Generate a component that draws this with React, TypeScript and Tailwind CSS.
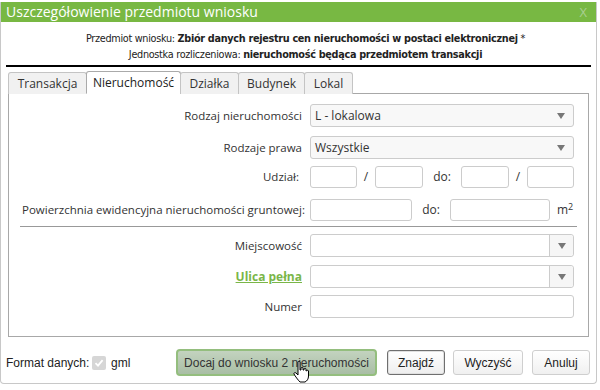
import React from 'react';

const tabs = [
  { name: 'Transakcja', w: 'w-[79px]' },
  { name: 'Nieruchomość', w: 'w-[95px]' },
  { name: 'Działka', w: 'w-[59px]' },
  { name: 'Budynek', w: 'w-[67px]' },
  { name: 'Lokal', w: 'w-[49px]' },
];

const Arrow = () => (
  <svg width="8" height="6" viewBox="0 0 8 6">
    <path d="M0 0 L8 0 L4 6 Z" fill="#777" />
  </svg>
);

const Select = ({ value }: { value: string }) => (
  <div className="w-[264px] h-[23px] shrink-0 border border-[#ccc] rounded-[3px] bg-[#f8f8f8] flex items-center justify-between pl-[4px] pr-[8px] text-[12px] text-[#333]">
    <span>{value}</span>
    <Arrow />
  </div>
);

const Combo = () => (
  <div className="w-[264px] h-[23px] shrink-0 border border-[#ccc] rounded-[3px] bg-white flex">
    <div className="flex-1" />
    <div className="w-[24px] border-l border-[#ccc] bg-[#f6f6f6] rounded-r-[3px] flex items-center justify-center">
      <Arrow />
    </div>
  </div>
);

const Input = ({ w }: { w: string }) => (
  <div className={`${w} h-[22px] shrink-0 border border-[#ccc] rounded-[3px] bg-white`} />
);

const Label = ({ children, green }: { children: React.ReactNode; green?: boolean }) => (
  <div
    className={
      green
        ? 'w-[293px] shrink-0 text-right text-[12px] font-bold text-[#7ab648] underline'
        : 'w-[293px] shrink-0 text-right text-[11.5px] text-[#333]'
    }
  >
    {children}
  </div>
);

export default function App() {
  return (
    <div className="w-[600px] h-[390px] bg-white relative overflow-hidden" style={{ fontFamily: '"Open Sans", sans-serif' }}>
      <div className="mt-[2px] w-[597px] h-[382px] border border-t-0 border-[#c8c8c8] rounded-b-[4px] flex flex-col bg-white">
        {/* Title */}
        <div className="h-[20px] bg-[#78b843] flex items-center justify-between pl-[5px] pr-[9px]">
          <span className="text-white text-[14px] leading-none">Uszczegółowienie przedmiotu wniosku</span>
          <span className="text-[#a9cf92] text-[13px] leading-none">X</span>
        </div>

        {/* Header */}
        <div
          className="pt-[9px] pb-[2px] mx-[5px] border-b-2 border-black text-center text-[9.7px] text-[#222] leading-[16px] whitespace-nowrap"
          style={{ fontFamily: '"DejaVu Sans", sans-serif', letterSpacing: '-0.3px' }}
        >
          <div className="pl-[14px]">
            Przedmiot wniosku: <b>Zbiór danych rejestru cen nieruchomości w postaci elektronicznej</b> *
          </div>
          <div className="pl-[14px]">
            Jednostka rozliczeniowa: <b>nieruchomość będąca przedmiotem transakcji</b>
          </div>
        </div>

        {/* Tabs */}
        <div className="mt-[4px] ml-[7px] flex items-end h-[23px] relative z-10">
          {tabs.map((t) => (
            <div
              key={t.name}
              className={
                t.name === 'Nieruchomość'
                  ? `${t.w} h-[23px] flex items-center justify-center bg-white border border-[#aaa] border-b-white rounded-t-[3px] text-[12px] text-[#222] -mr-px`
                  : `${t.w} h-[22px] flex items-center justify-center bg-[#f1f1f1] border border-[#c4c4c4] border-b-0 rounded-t-[3px] text-[12px] text-[#333] -mr-px`
              }
            >
              {t.name}
            </div>
          ))}
        </div>

        {/* Panel */}
        <div className="ml-[7px] w-[581px] h-[244px] -mt-px border border-[#a8a8a8] pt-[10px] flex flex-col">
          <div className="flex items-center gap-[8px]">
            <Label>Rodzaj nieruchomości</Label>
            <Select value="L - lokalowa" />
          </div>
          <div className="flex items-center gap-[8px] mt-[9px]">
            <Label>Rodzaje prawa</Label>
            <Select value="Wszystkie" />
          </div>
          <div className="flex items-center mt-[7px] text-[12px] text-[#333]">
            <div className="w-[290px] shrink-0 text-right text-[11.5px]">Udział:</div>
            <div className="w-[11px] shrink-0" />
            <Input w="w-[47px]" />
            <span className="w-[18px] shrink-0 text-center">/</span>
            <Input w="w-[48px]" />
            <span className="w-[38px] shrink-0 text-center">do:</span>
            <Input w="w-[48px]" />
            <span className="w-[18px] shrink-0 text-center">/</span>
            <Input w="w-[47px]" />
          </div>
          <div className="flex items-center mt-[11px] text-[12px] text-[#333] whitespace-nowrap">
            <div className="pl-[13px] w-[301px] shrink-0 text-[11.5px]">Powierzchnia ewidencyjna nieruchomości gruntowej:</div>
            <Input w="w-[102px]" />
            <span className="w-[38px] shrink-0 text-center">do:</span>
            <Input w="w-[100px]" />
            <span className="ml-[7px]">
              m<sup className="text-[9px]">2</sup>
            </span>
          </div>
          <div className="mx-[11px] mt-[5px] border-t border-[#999]" />
          <div className="flex items-center gap-[8px] mt-[7px]">
            <Label>Miejscowość</Label>
            <Combo />
          </div>
          <div className="flex items-center gap-[8px] mt-[8px]">
            <Label green>Ulica pełna</Label>
            <Combo />
          </div>
          <div className="flex items-center gap-[8px] mt-[7px]">
            <Label>Numer</Label>
            <div className="w-[264px] h-[23px] border border-[#ccc] rounded-[3px] bg-white" />
          </div>
        </div>

        {/* Footer */}
        <div
          className="flex items-center pl-[5px] mt-[12px] text-[12px] text-[#222] whitespace-nowrap"
          style={{ fontFamily: '"Liberation Sans", Arial, sans-serif' }}
        >
          <span className="w-[80px] shrink-0">Format danych:</span>
          <div className="ml-[6px] w-[14px] h-[14px] shrink-0 rounded-[2px] bg-[#d6d6d6] flex items-center justify-center">
            <svg width="10" height="10" viewBox="0 0 10 10">
              <path d="M1.5 5.2 L4 7.6 L8.6 2.2" stroke="#fff" strokeWidth="1.8" fill="none" />
            </svg>
          </div>
          <span className="ml-[5px] w-[20px] shrink-0">gml</span>
          <div className="ml-[45px] w-[201px] h-[27px] shrink-0 rounded-[4px] border-2 border-[#94be7e] bg-gradient-to-b from-[#c3d3bf] to-[#a9bea5] flex items-center justify-center text-[#333]">
            Docaj do wniosku 2 nieruchomości
          </div>
          <div className="ml-[10px] w-[58px] h-[25px] shrink-0 rounded-[3px] border border-[#6f6f6f] bg-gradient-to-b from-white to-[#eeeeee] flex items-center justify-center shadow-[inset_0_0_0_1px_#e0e0e0]">
            Znajdź
          </div>
          <div className="ml-[8px] w-[70px] h-[25px] shrink-0 rounded-[3px] border border-[#cfcfcf] bg-gradient-to-b from-white to-[#f0f0f0] flex items-center justify-center">
            Wyczyść
          </div>
          <div className="ml-[9px] w-[58px] h-[25px] shrink-0 rounded-[3px] border border-[#cfcfcf] bg-gradient-to-b from-white to-[#f0f0f0] flex items-center justify-center">
            Anuluj
          </div>
        </div>
      </div>

      {/* cursor */}
      <svg className="absolute left-[293px] top-[361px]" width="16" height="22" viewBox="0 0 16 22">
        <path
          d="M5 1 C5 0 7 0 7 1 L7 9 L8 9 L8 7 C8 6 10 6 10 7 L10 9 L11 9 L11 8 C11 7 13 7 13 8 L13 10 L13.5 10 C13.5 9 15.5 9 15.5 10 L15.5 15 C15.5 18 14 20 12 21 L7 21 C5 19 2 15 1 13 C0.5 12 2 11 3 12 L5 14 Z"
          fill="#fff"
          stroke="#000"
          strokeWidth="1"
        />
      </svg>
    </div>
  );
}
